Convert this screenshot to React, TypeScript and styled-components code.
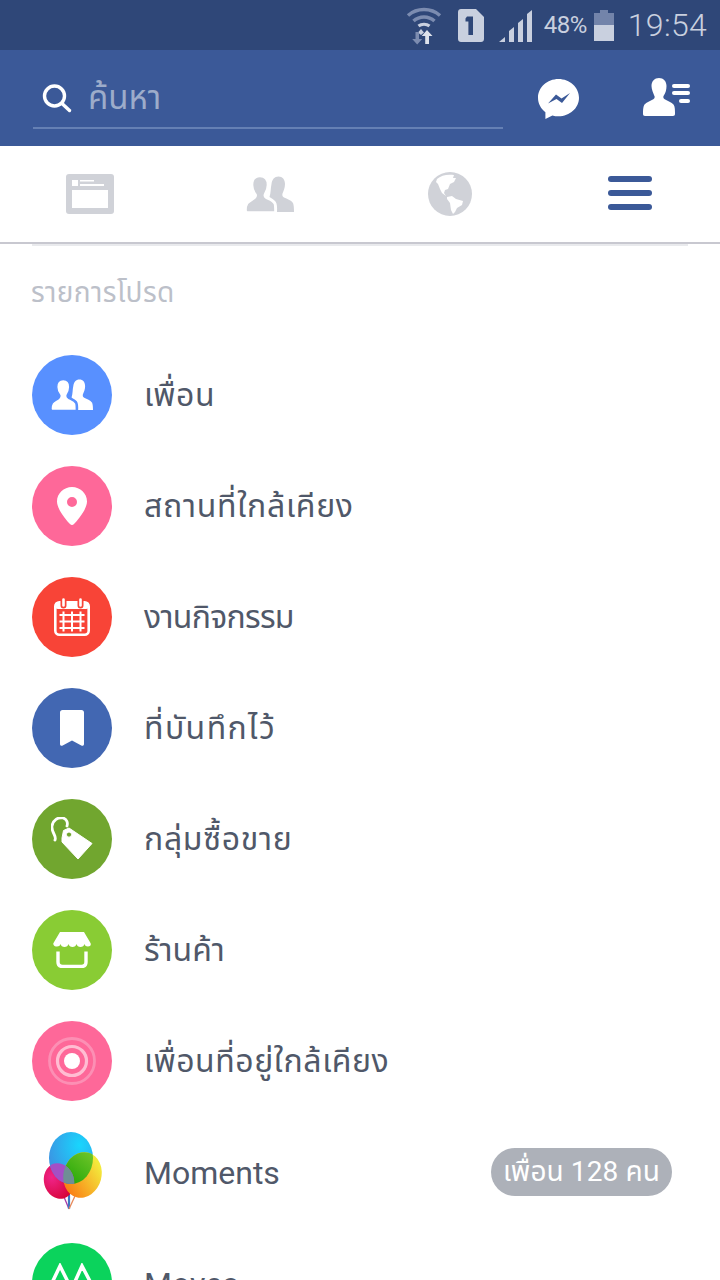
import React from "react";
import styled, { createGlobalStyle } from "styled-components";

const FONT = `Roboto, "Noto Sans", "Noto Sans Thai", "Liberation Sans", "DejaVu Sans", sans-serif`;

const Global = createGlobalStyle`
  html, body { margin: 0; padding: 0; background: #fff; }
  body { font-family: ${FONT}; }
  #root { width: 720px; height: 1280px; overflow: hidden; }
`;
const Page = styled.div`
  width: 720px; height: 1280px; overflow: hidden; display: flex; flex-direction: column; background: #fff;
`;
const StatusBar = styled.div`
  height: 50px; flex: none; background: #2f4778; display: flex; align-items: center; justify-content: flex-end;
  color: #c9d0df; padding-right: 13px; box-sizing: border-box;
`;
const StatusPct = styled.span`
  font-size: 24px; letter-spacing: -0.5px; margin-left: 12px; margin-right: 7px; line-height: 50px;
`;
const StatusTime = styled.span`
  font-size: 32px; font-weight: 300; margin-left: 14px; letter-spacing: 0.3px; line-height: 50px;
`;
const Sim = styled.svg` margin-left: 16px; `;
const Signal = styled.svg` margin-left: 15px; `;
const Header = styled.div`
  height: 96px; flex: none; background: #3b5998; display: flex; align-items: flex-start; box-sizing: border-box; padding-left: 33px;
`;
const Search = styled.div`
  width: 470px; height: 79px; border-bottom: 2px solid #6580b4; display: flex; align-items: center; padding: 20px 0 0 9px; box-sizing: border-box;
`;
const SearchText = styled.span`
  font-size: 33px; color: #9dacca; margin-left: 16px;
`;
const Messenger = styled.svg` margin: 29px 0 0 35px; `;
const Requests = styled.svg` margin: 28px 0 0 64px; `;
const Tabs = styled.div`
  height: 98px; flex: none; display: grid; grid-template-columns: repeat(4, 180px); align-items: center; justify-items: center;
  box-sizing: border-box; border-bottom: 2px solid #c8c8d0;
`;
const Burger = styled.svg` margin-top: -2px; `;
const InsetRule = styled.div`
  height: 2px; flex: none; margin: 0 32px; background: #e9eaed;
`;
const SectionTitle = styled.div`
  font-size: 28px; letter-spacing: 0.4px; color: #bcc0c9; padding-left: 31px; height: 50px; margin-top: 27px; line-height: 40px; flex: none;
`;
const List = styled.div`
  display: flex; flex-direction: column; margin-top: 16px;
`;
const Row = styled.div`
  height: 111px; flex: none; display: flex; align-items: center; padding: 0 48px 0 32px; box-sizing: border-box;
`;
const Circle = styled.div<{ $bg: string }>`
  width: 80px; height: 80px; border-radius: 50%; background: ${(p) => p.$bg}; flex: none; display: flex; align-items: center; justify-content: center;
`;
const Balloons = styled.div`
  width: 80px; height: 80px; flex: none; display: flex; align-items: center; justify-content: center;
`;
const Label = styled.span<{ $track?: number }>`
  font-size: 32px; color: #505869; margin-left: 32px; padding-top: 2px; flex: 1; white-space: nowrap;
  letter-spacing: ${(p) => p.$track ?? 0}px;
`;
const Badge = styled.span`
  height: 48px; width: 181px; border-radius: 24px; background: #adb1b9; color: #fff; font-size: 28px; letter-spacing: 0.1px; padding-top: 1px; box-sizing: border-box;
  display: flex; align-items: center; justify-content: center; white-space: nowrap;
`;

const People = ({ c, s, gap }: { c: string; s: number; gap: string }) => (
  <svg width={s} height={s * 0.75} viewBox="0 0 48 36" fill={c}>
    <path d="M32.500.5C36.500.5 39 3.500 39 8c0 4-1.500 7-2.500 9.500-.5 2 0 3 1.500 4 3 1.500 7 2.500 9 5.500.8 2 1 5 1 9H31c.3-5 0-8.500-1.500-10.500-1.500-2-4-3-6-4.500 1.500-4 1-9 2-13 .5-4.500 3-7.500 7-7.500z" />
    <path d="M14 .5c5 0 7.500 3.500 7.500 8.500 0 4-1.500 7-3 9.500-.5 1.500 0 2.500 1.500 3.500 3 1.500 7 2.500 8.500 6 .5 2 .5 6 .5 8H1.500C.5 36 0 35.500 0 34c0-3 .5-5 1.500-6.500 2-2.500 5.500-3.500 7.500-5.500 1-1 1.500-2 1-3.500C8 16 6.500 13 6.500 9c0-5 2.500-8.500 7.500-8.500z" stroke={gap} strokeWidth="1.600" />
  </svg>
);

const App = () => (
  <Page>
    <Global />
    <StatusBar>
      <svg width="36" height="42" viewBox="0 0 36 42">
        <g fill="none" strokeLinecap="butt">
          <path d="M2 11.500C11 3.500 25 3.500 34 11.500" stroke="#7c8cb0" strokeWidth="3.500" />
          <path d="M7.500 17C13.500 11.500 22.500 11.500 28.500 17" stroke="#7c8cb0" strokeWidth="3.500" />
          <path d="M12.500 22C15.500 19.500 20.500 19.500 23.500 22" stroke="#c9d0df" strokeWidth="3" />
        </g>
        <path d="M15 25l3 3.500-3 2.500-3-2.500z" fill="#c9d0df" />
        <path d="M9.500 28h3.500v7h3.200l-5 5.500-5-5.500h3.300z" fill="#7c8cb0" />
        <path d="M21 26l5.500 6h-3.500v8h-3.800v-8h-3.500z" fill="#dfe3ec" />
      </svg>
      <Sim width="26" height="33" viewBox="0 0 26 33">
        <path d="M3 0h15l8 8v22c0 1.700-1.300 3-3 3H3c-1.700 0-3-1.300-3-3V3c0-1.700 1.300-3 3-3z" fill="#c9d0df" />
        <path d="M9 7.500h6V26h-4.600V12.500H7.500v-3z" fill="#2f4778" />
      </Sim>
      <Signal width="33" height="33" viewBox="0 0 33 33" fill="#c9d0df">
        <path d="M0 33l6-5v5z" />
        <path d="M10 33v-11l5-4v15z" />
        <path d="M19 33V14l5-4v23z" />
        <path d="M28 33V5l5-4v32z" />
      </Signal>
      <StatusPct>48%</StatusPct>
      <svg width="20" height="31" viewBox="0 0 20 31">
        <path d="M6 0h8v3h6v12H0V3h6z" fill="#7384aa" />
        <rect y="15" width="20" height="16" fill="#c9d0df" />
      </svg>
      <StatusTime>19:54</StatusTime>
    </StatusBar>

    <Header>
      <Search>
        <svg width="30" height="30" viewBox="0 0 30 30" fill="none" stroke="#fff" strokeWidth="3.400" strokeLinecap="round">
          <circle cx="12.500" cy="12" r="10" />
          <path d="M20 19.500l7.500 7" />
        </svg>
        <SearchText>ค้นหา</SearchText>
      </Search>
      <Messenger width="41" height="40" viewBox="0 0 41 40">
        <path d="M20.500 0C9.200 0 0 8.300 0 18.800c0 5.800 2.900 11 7.400 14.400V40l7-3.600c1.900.6 4 .9 6.100.9 11.300 0 20.500-8.200 20.500-18.500C41 8.300 31.800 0 20.500 0z" fill="#fff" />
        <path d="M10 24.500l8-9 5.500 4 8.500-5.500-8 10-5.500-4z" fill="#3b5998" />
      </Messenger>
      <Requests width="48" height="38" viewBox="0 0 48 38" fill="#fff">
        <path d="M16 0c4.400 0 7.500 3.200 7.500 8 0 3.500-.9 7-2.700 9.500-.9 1.400-.6 2.800.9 3.800 3 1.800 6.800 2.700 9 5.500 1.300 2 1.300 5.500 1.300 9.200 0 1.300-.7 2-2 2H2c-1.300 0-2-.7-2-2 0-3.700 0-6.700 1.300-9.200 2.200-2.800 6-3.700 9-5.500 1.500-1 1.800-2.400.9-3.800C10.400 15 8.500 11.500 8.500 8c0-4.800 3.100-8 7.500-8z" />
        <rect x="29" y="6" width="18" height="4" rx="2" />
        <rect x="29" y="13" width="18" height="4" rx="2" />
        <rect x="36" y="21" width="11" height="4" rx="2" />
      </Requests>
    </Header>

    <Tabs>
      <svg width="48" height="40" viewBox="0 0 48 40">
        <rect width="48" height="40" rx="3" fill="#d0d2d8" />
        <rect x="6" y="6" width="6" height="6" fill="#fff" />
        <rect x="14" y="6" width="14" height="1.500" fill="#fff" />
        <rect x="14" y="10" width="24" height="2" fill="#fff" />
        <rect x="6" y="16" width="36" height="18" fill="#fff" />
      </svg>
      <People c="#d0d2d8" s={48} gap="#fff" />
      <svg width="44" height="44" viewBox="0 0 44 44">
        <circle cx="22" cy="22" r="22" fill="#d0d2d8" />
        <path d="M9 7c4-4 11-5 17-4l-1 3 3 0-2 4-4 2-2 5-3 1-1 3 2 3-4-3-2-4-2-5-2-2z" fill="#fff" />
        <path d="M19 25l5-1 4 3 7 2-1 4-5 3-2 4-2 2-2-4-1-7-3-4z" fill="#fff" />
      </svg>
      <Burger width="44" height="34" viewBox="0 0 44 34" fill="#3b5998">
        <rect width="44" height="6" rx="3" />
        <rect y="14" width="44" height="6" rx="3" />
        <rect y="28" width="44" height="6" rx="3" />
      </Burger>
    </Tabs>
    <InsetRule />
    <SectionTitle>รายการโปรด</SectionTitle>

    <List>
      <Row>
        <Circle $bg="#5890ff"><People c="#fff" s={42} gap="#5890ff" /></Circle>
        <Label $track={0.5}>เพื่อน</Label>
      </Row>
      <Row>
        <Circle $bg="#fe6899">
          <svg width="30" height="38" viewBox="0 0 30 38">
            <path fillRule="evenodd" d="M15 0C6.700 0 0 6.500 0 14.500 0 22 9 33 13 37c1.200 1.200 2.800 1.200 4 0 4-4 13-15 13-22.500C30 6.500 23.300 0 15 0zm0 10a5 5 0 1 1 0 10 5 5 0 0 1 0-10z" fill="#fff" />
          </svg>
        </Circle>
        <Label $track={0.7}>สถานที่ใกล้เคียง</Label>
      </Row>
      <Row>
        <Circle $bg="#f84437">
          <svg width="36" height="38" viewBox="0 0 36 38" fill="none" stroke="#fff">
            <rect x="1.300" y="4.300" width="33.400" height="32.400" rx="4" strokeWidth="2.600" />
            <rect x="1" y="4" width="34" height="7" rx="3" fill="#fff" strokeWidth="0" />
            <path d="M9.500 1.500v6M26.500 1.500v6" strokeWidth="6" strokeLinecap="round" stroke="#f84437" />
            <path d="M9.500 1.500v6M26.500 1.500v6" strokeWidth="2.600" strokeLinecap="round" />
            <path d="M5.500 17h25M5.500 23.500h25M5.500 30h25M9.500 13.500v20M18 13.500v20M26.500 13.500v20" strokeWidth="2" />
          </svg>
        </Circle>
        <Label $track={-0.7}>งานกิจกรรม</Label>
      </Row>
      <Row>
        <Circle $bg="#4267b2">
          <svg width="24" height="36" viewBox="0 0 24 36">
            <path d="M2.500 0h19C23 0 24 1 24 2.500V34c0 1.500-1.300 2.300-2.700 1.500L12 30.500l-9.300 5C1.300 36.300 0 35.500 0 34V2.500C0 1 1 0 2.500 0z" fill="#fff" />
          </svg>
        </Circle>
        <Label $track={1.4}>ที่บันทึกไว้</Label>
      </Row>
      <Row>
        <Circle $bg="#71a62f">
          <svg width="42" height="43" viewBox="0 0 42 43">
            <path d="M4 23C6 19 0 15 1 9 2 3 7 0 12 1c4 1 5 5 4 8" fill="none" stroke="#fff" strokeWidth="2.800" strokeLinecap="round" />
            <path fillRule="evenodd" d="M11 21l1.500-7.500L18 11l23 15.500L27 42 11 25zm7-6a2.600 2.600 0 1 0 0 5.200 2.600 2.600 0 0 0 0-5.200z" fill="#fff" stroke="#fff" strokeWidth="1" strokeLinejoin="round" />
          </svg>
        </Circle>
        <Label $track={0.7}>กลุ่มซื้อขาย</Label>
      </Row>
      <Row>
        <Circle $bg="#89cc34">
          <svg width="38" height="36" viewBox="0 0 38 36">
            <path d="M7 0h24l6.500 11c1 2-.5 3.500-2.500 3.500-2 0-3-.8-3.500-2.500-.5 1.700-2 3-4 3s-3.500-1.300-4-3c-.5 1.700-2 3-4 3s-3.500-1.300-4-3c-.5 1.700-2 3-4 3s-3.500-1.300-4-3c-.5 1.700-1.500 2.500-3.500 2.500S-.5 13 .5 11z" fill="#fff" />
            <path d="M5 19.500V30c0 2.800 1.700 4.500 4.500 4.500h19c2.800 0 4.500-1.700 4.500-4.500V19.500" fill="none" stroke="#fff" strokeWidth="3.400" />
          </svg>
        </Circle>
        <Label>ร้านค้า</Label>
      </Row>
      <Row>
        <Circle $bg="#fe6899">
          <svg width="48" height="48" viewBox="0 0 48 48" fill="none">
            <circle cx="24" cy="24" r="22.500" stroke="#fc8fb4" strokeWidth="2.800" />
            <circle cx="24" cy="24" r="14.500" stroke="#ffbdd2" strokeWidth="3.200" />
            <circle cx="24" cy="24" r="8" fill="#fff" />
          </svg>
        </Circle>
        <Label $track={0.55}>เพื่อนที่อยู่ใกล้เคียง</Label>
      </Row>
      <Row>
        <Balloons>
          <svg width="62" height="80" viewBox="0 0 62 80">
            <defs>
              <radialGradient id="bBlue" cx="0.7" cy="0.25" r="0.85"><stop offset="0" stopColor="#18d6fd" /><stop offset="1" stopColor="#3f8de0" /></radialGradient>
              <radialGradient id="bPink" cx="0.3" cy="0.35" r="0.8"><stop offset="0" stopColor="#f0248a" /><stop offset="1" stopColor="#d3002c" /></radialGradient>
              <linearGradient id="bYellow" x1="0.85" y1="0.2" x2="0.25" y2="1"><stop offset="0" stopColor="#f3ea3c" /><stop offset="1" stopColor="#fb7812" /></linearGradient>
              <linearGradient id="bGreen" x1="0.7" y1="0" x2="0.3" y2="1"><stop offset="0" stopColor="#72c62a" /><stop offset="1" stopColor="#14a000" /></linearGradient>
              <clipPath id="cBlue"><ellipse cx="30" cy="26" rx="22" ry="26" /></clipPath>
              <clipPath id="cPink"><ellipse cx="18" cy="49" rx="15" ry="18" transform="rotate(-15 18 49)" /></clipPath>
              <clipPath id="cYellow"><ellipse cx="41.500" cy="43" rx="19" ry="23" transform="rotate(15 41.500 43)" /></clipPath>
            </defs>
            <g fill="none" strokeWidth="1.300">
              <path d="M23 65l5 12" stroke="#a83ba8" />
              <path d="M28 58v19" stroke="#3e79c2" strokeWidth="2.200" />
              <path d="M34 64l-6 13" stroke="#e7895a" />
            </g>
            <ellipse cx="18" cy="49" rx="15" ry="18" transform="rotate(-15 18 49)" fill="url(#bPink)" />
            <ellipse cx="30" cy="26" rx="22" ry="26" fill="url(#bBlue)" />
            <ellipse cx="41.500" cy="43" rx="19" ry="23" transform="rotate(15 41.500 43)" fill="url(#bYellow)" />
            <g clipPath="url(#cBlue)">
              <ellipse cx="41.500" cy="43" rx="19" ry="23" transform="rotate(15 41.500 43)" fill="url(#bGreen)" />
              <ellipse cx="18" cy="49" rx="15" ry="18" transform="rotate(-15 18 49)" fill="#a44fc6" />
              <g clipPath="url(#cPink)">
                <ellipse cx="41.500" cy="43" rx="19" ry="23" transform="rotate(15 41.500 43)" fill="#6f8f95" />
              </g>
            </g>
          </svg>
        </Balloons>
        <Label>Moments</Label>
        <Badge>เพื่อน 128 คน</Badge>
      </Row>
      <Row>
        <Circle $bg="#0bd35c">
          <svg width="50" height="40" viewBox="0 0 50 40" fill="none" stroke="#fff" strokeWidth="3.500">
            <path d="M3 24L13 3l10 20h3L35 3l11 21" />
          </svg>
        </Circle>
        <Label>Moves</Label>
      </Row>
    </List>
  </Page>
);

export default App;
